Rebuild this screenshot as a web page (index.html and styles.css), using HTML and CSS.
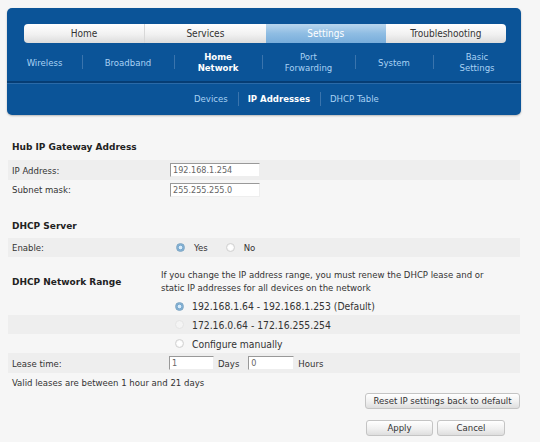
FILE: index.html
```html
<!DOCTYPE html>
<html>
<head>
<meta charset="utf-8">
<link rel="stylesheet" href="styles.css">
</head>
<body>
<div class="header">
  <div class="tabs">
    <div class="tab">Home</div>
    <div class="tab">Services</div>
    <div class="tab active">Settings</div>
    <div class="tab">Troubleshooting</div>
  </div>
  <div class="subnav">
    <div class="sn w1">Wireless</div>
    <div class="sn w2 sep">Broadband</div>
    <div class="sn w3 sep cur">Home<br>Network</div>
    <div class="sn w4 sep">Port<br>Forwarding</div>
    <div class="sn w5 sep">System</div>
    <div class="sn w6 sep">Basic<br>Settings</div>
  </div>
  <div class="subsub">
    <div class="ss">Devices</div>
    <div class="ss sep cur">IP Addresses</div>
    <div class="ss sep">DHCP Table</div>
  </div>
</div>

<div class="content">
  <div class="heading h1">Hub IP Gateway Address</div>
  <div class="row stripe r20">
    <div class="label">IP Address:</div>
    <div class="val"><span class="input wide">192.168.1.254</span></div>
  </div>
  <div class="row r19">
    <div class="label">Subnet mask:</div>
    <div class="val"><span class="input wide">255.255.255.0</span></div>
  </div>

  <div class="heading h2">DHCP Server</div>
  <div class="row stripe r19">
    <div class="label">Enable:</div>
    <div class="val">
      <span class="radio on"></span><span class="rlab">Yes</span>
      <span class="radio"></span><span class="rlab">No</span>
    </div>
  </div>

  <div class="row range">
    <div class="label bold rlabel">DHCP Network Range</div>
    <div class="note">If you change the IP address range, you must renew the DHCP lease and or static IP addresses for all devices on the network</div>
  </div>
  <div class="row r18">
    <div class="label"></div>
    <div class="val opt"><span class="radio on"></span><span class="olab">192.168.1.64 - 192.168.1.253 (Default)</span></div>
  </div>
  <div class="row stripe r19">
    <div class="label"></div>
    <div class="val opt"><span class="radio faint"></span><span class="olab">172.16.0.64 - 172.16.255.254</span></div>
  </div>
  <div class="row r19">
    <div class="label"></div>
    <div class="val opt"><span class="radio"></span><span class="olab">Configure manually</span></div>
  </div>
  <div class="row stripe r20">
    <div class="label">Lease time:</div>
    <div class="val">
      <span class="input days">1</span><span class="unit">Days</span>
      <span class="input hours">0</span><span class="unit">Hours</span>
    </div>
  </div>
  <div class="row r19">
    <div class="label full">Valid leases are between 1 hour and 21 days</div>
  </div>
  <div class="btnrow b1">
    <span class="btn reset">Reset IP settings back to default</span>
  </div>
  <div class="btnrow b2">
    <span class="btn apply">Apply</span>
    <span class="btn cancel">Cancel</span>
  </div>
</div>
</body>
</html>
```

FILE: styles.css
```css
html, body {
  margin: 0;
  padding: 0;
  background: #f6f6f6;
  font-family: "DejaVu Sans Condensed", "DejaVu Sans", sans-serif;
  font-size: 9.5px;
  color: #333;
}

.header {
  margin: 8px 19px 0 7px;
  height: 107px;
  background: #0b5498;
  border-radius: 5px;
  box-shadow: 0 1px 2px rgba(0,0,0,0.25);
  padding-top: 16px;
  box-sizing: border-box;
}

.tabs {
  margin: 0 15px 0 17px;
  height: 19px;
  display: flex;
  border-radius: 4px;
  overflow: hidden;
}
.tab {
  flex: 1;
  text-align: center;
  line-height: 19px;
  font-size: 10px;
  color: #333;
  background: linear-gradient(#ffffff, #f1f1f1 55%, #dcdcdc);
  border-left: 1px solid #d8d8d8;
}
.tab:first-child { border-left: none; }
.tab.active {
  color: #fff;
  background: linear-gradient(#b9d6ee, #8fbde3 50%, #78addb);
  border-left: none;
}
.tab.active + .tab { border-left: none; }

.subnav {
  display: flex;
  height: 38px;
  align-items: center;
  border-bottom: 2px solid #063d74;
  box-shadow: 0 1px 0 #2a6aa8;
}
.sn {
  position: relative;
  text-align: center;
  color: #a9d2f4;
  font-size: 9.5px;
  line-height: 11px;
}
.sn.cur { color: #fff; font-weight: bold; }
.sn.sep::before, .ss.sep::before {
  content: "";
  position: absolute;
  left: 0;
  top: 50%;
  height: 14px;
  margin-top: -7px;
  border-left: 1px solid #3a74ad;
}
.w1 { width: 75px; }
.w2 { width: 92px; }
.w3 { width: 88px; }
.w4 { width: 93px; }
.w5 { width: 78px; }
.w6 { width: 88px; }

.subsub {
  display: flex;
  height: 31px;
  align-items: center;
  padding-left: 177px;
}
.ss {
  position: relative;
  color: #a9d2f4;
  font-size: 9.5px;
  padding: 0 10px;
}
.ss.cur { color: #fff; font-weight: bold; }

.content {
  margin: 0 20px 0 8px;
}
.heading {
  font-family: "DejaVu Sans", sans-serif;
  font-weight: bold;
  color: #222;
  padding-left: 4px;
  font-size: 9px;
}
.h1 { padding-top: 27px; height: 18px; }
.h2 { padding-top: 22px; height: 17px; }

.row {
  display: flex;
  align-items: center;
}
.stripe { background: #eeeeee; }
.r18 { height: 18px; }
.r19 { height: 19px; }
.r20 { height: 20px; }
.label {
  width: 158px;
  padding-left: 4px;
  flex: none;
}
.label.full { width: auto; }
.bold {
  font-family: "DejaVu Sans", sans-serif;
  font-weight: bold;
  color: #222;
  font-size: 9px;
}
.val {
  display: flex;
  align-items: center;
}
.input {
  display: inline-block;
  box-sizing: border-box;
  height: 14px;
  line-height: 12px;
  background: #fff;
  border-top: 1px solid #999;
  border-left: 1px solid #999;
  border-right: 1px solid #eee;
  border-bottom: 1px solid #eee;
  padding-left: 2px;
  color: #666;
  font-size: 9px;
}
.input.wide { width: 90px; }
.input.days { width: 45px; margin-left: -1px; }
.input.hours { width: 46px; }
.unit { margin: 0 5px 0 4px; }
.input.days + .unit { margin-right: 9px; }

.radio {
  display: inline-block;
  width: 9px;
  height: 9px;
  border-radius: 50%;
  box-sizing: border-box;
  border: 1px solid #d2d2d2;
  background: radial-gradient(circle, #fff 40%, #e8e8e8 100%);
  margin-left: 6px;
}
.radio.on {
  border-color: #7ea6c4;
  background: radial-gradient(circle, #d9ecfa 0 30%, #79a9cf 45%, #9cc3e0 100%);
}
.radio.faint { border-color: #e4e4e4; background: #f4f4f4; }
.rlab { margin-left: 9px; margin-right: 12px; }
.opt .radio { margin-left: 5px; }
.olab { margin-left: 8px; font-size: 10.3px; }

.range {
  height: 40px;
  align-items: flex-start;
}
.rlabel { padding-top: 20px; }
.note {
  margin-left: -9px;
  line-height: 13px;
  width: 345px;
  padding-top: 11px;
}

.btnrow {
  display: flex;
  justify-content: flex-end;
  gap: 4px;
}
.b1 { margin-top: 1px; }
.b2 { margin-top: 11px; padding-right: 15px; }
.btn {
  display: inline-block;
  box-sizing: border-box;
  height: 16px;
  line-height: 14px;
  text-align: center;
  border: 1px solid #c4c4c4;
  border-radius: 3px;
  background: linear-gradient(#ffffff, #f0f0f0 55%, #dedede);
  color: #333;
  font-size: 9.5px;
}
.reset { width: 155px; }
.apply { width: 67px; }
.cancel { width: 68px; }
```
